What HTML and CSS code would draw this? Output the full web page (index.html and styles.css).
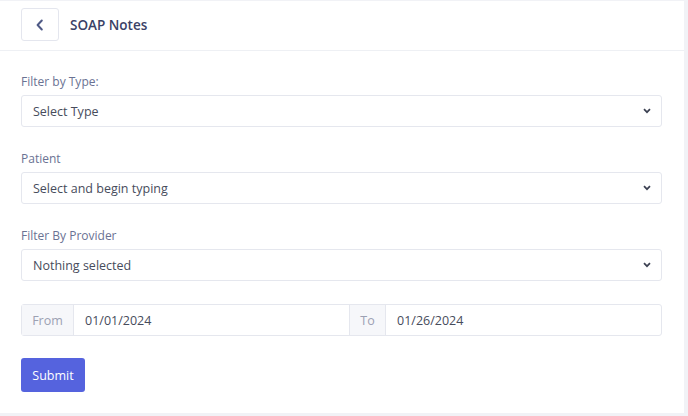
FILE: index.html
```html
<!DOCTYPE html>
<html>
<head>
<meta charset="utf-8">
<link rel="stylesheet" href="styles.css">
</head>
<body>
<div class="card">
  <div class="header">
    <button class="back" aria-label="Back">
      <svg width="10" height="12" viewBox="0 0 10 12"><path d="M6.8 1.5 L2.6 6 L6.8 10.5" fill="none" stroke="#4f5a86" stroke-width="2" stroke-linecap="round" stroke-linejoin="round"/></svg>
    </button>
    <h1 class="title">SOAP Notes</h1>
  </div>
  <div class="body">
    <div class="field">
      <label class="label">Filter by Type:</label>
      <div class="select"><span>Select Type</span><svg class="chev" width="8" height="6" viewBox="0 0 8 6"><path d="M1 1.2 L4 4.2 L7 1.2" fill="none" stroke="#3c4152" stroke-width="1.7"/></svg></div>
    </div>
    <div class="field">
      <label class="label">Patient</label>
      <div class="select"><span>Select and begin typing</span><svg class="chev" width="8" height="6" viewBox="0 0 8 6"><path d="M1 1.2 L4 4.2 L7 1.2" fill="none" stroke="#3c4152" stroke-width="1.7"/></svg></div>
    </div>
    <div class="field">
      <label class="label">Filter By Provider</label>
      <div class="select"><span>Nothing selected</span><svg class="chev" width="8" height="6" viewBox="0 0 8 6"><path d="M1 1.2 L4 4.2 L7 1.2" fill="none" stroke="#3c4152" stroke-width="1.7"/></svg></div>
    </div>
    <div class="daterow">
      <span class="addon from">From</span>
      <span class="dinput">01/01/2024</span>
      <span class="addon to">To</span>
      <span class="dinput last">01/26/2024</span>
    </div>
    <button class="submit">Submit</button>
  </div>
</div>
</body>
</html>
```
FILE: styles.css
```css
html, body {
  margin: 0;
  padding: 0;
}
body {
  background: #f1f2f6;
  font-family: "Open Sans", "Liberation Sans", sans-serif;
  width: 688px;
  height: 416px;
  overflow: hidden;
  padding-top: 1px;
  box-sizing: border-box;
}
.card {
  width: 684px;
  height: 412px;
  background: #fff;
  box-sizing: border-box;
}
.header {
  height: 50px;
  border-bottom: 1px solid #eef0f4;
  display: flex;
  align-items: center;
  padding-left: 21px;
  box-sizing: border-box;
}
.back {
  width: 38px;
  height: 33px;
  border: 1px solid #e4e6ee;
  border-radius: 3px;
  background: #fff;
  display: flex;
  align-items: center;
  justify-content: center;
  padding: 0;
  margin-top: -2px;
}
.title {
  margin: 0 0 0 11px;
  font-size: 13.5px;
  font-weight: 600;
  color: #3a4166;
  margin-top: -2px;
}
.body {
  padding: 22px 22px 0 21px;
}
.field {
  margin-bottom: 23px;
}
.label {
  display: block;
  font-size: 12px;
  color: #6a7293;
  line-height: 18px;
  margin-bottom: 4px;
}
.select {
  height: 32px;
  border: 1px solid #e5e7ee;
  border-radius: 3px;
  box-sizing: border-box;
  display: flex;
  align-items: center;
  justify-content: space-between;
  padding: 0 10px 0 11px;
  font-size: 12.5px;
  color: #474c5c;
}
.daterow {
  display: flex;
  height: 32px;
  border: 1px solid #e5e7ee;
  border-radius: 3px;
  box-sizing: border-box;
  font-size: 12.5px;
  margin-top: 2px;
}
.addon {
  background: #f6f7fa;
  color: #9ca1b3;
  display: flex;
  align-items: center;
  justify-content: center;
  border-right: 1px solid #e5e7ee;
  box-sizing: border-box;
}
.from { width: 52px; }
.to { width: 37px; border-left: 1px solid #e5e7ee; }
.dinput {
  flex: 1;
  display: flex;
  align-items: center;
  padding-left: 11px;
  color: #474c5c;
}
.submit {
  margin-top: 22px;
  width: 64px;
  height: 34px;
  background: #5563de;
  color: #fff;
  border: none;
  border-radius: 3px;
  font-family: inherit;
  font-size: 12.5px;
  font-weight: 500;
  padding: 0;
  display: block;
}
```
